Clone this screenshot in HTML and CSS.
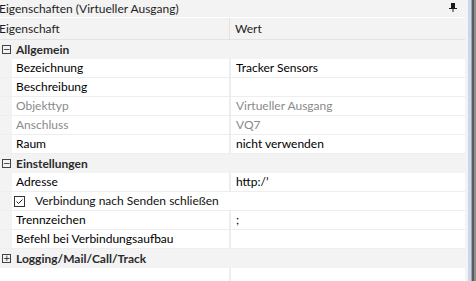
FILE: index.html
```html
<!DOCTYPE html>
<html lang="de">
<head>
<meta charset="utf-8">
<link rel="stylesheet" href="styles.css">
</head>
<body>
<div class="window">
  <div class="panel">
    <div class="titlebar">
      <span class="title">Eigenschaften (Virtueller Ausgang)</span>
      <svg class="pin" width="8" height="9" viewBox="0 0 8 9"><path d="M2 0.5H6M2.5 0.5V5.5M5.5 0.5V5.5M0 5.5H8M4 5.5V9" stroke="#1a1a1a" stroke-width="1" fill="none"/><rect x="3" y="1" width="2" height="4.5" fill="#1a1a1a"/></svg>
    </div>
    <div class="header">
      <div class="hname">Eigenschaft</div>
      <div class="hvalue">Wert</div>
    </div>
    <div class="grid">
      <div class="cat"><span class="exp">−</span><span class="cattext">Allgemein</span></div>
      <div class="row"><div class="gutter"></div><div class="name">Bezeichnung</div><div class="value">Tracker Sensors</div></div>
      <div class="row"><div class="gutter"></div><div class="name">Beschreibung</div><div class="value"></div></div>
      <div class="row dis"><div class="gutter"></div><div class="name">Objekttyp</div><div class="value">Virtueller Ausgang</div></div>
      <div class="row dis"><div class="gutter"></div><div class="name">Anschluss</div><div class="value">VQ7</div></div>
      <div class="row"><div class="gutter"></div><div class="name">Raum</div><div class="value">nicht verwenden</div></div>
      <div class="cat"><span class="exp">−</span><span class="cattext">Einstellungen</span></div>
      <div class="row"><div class="gutter"></div><div class="name">Adresse</div><div class="value">http:/’</div></div>
      <div class="row"><div class="gutter"></div><div class="check"><svg class="box" width="11" height="11" viewBox="0 0 11 11"><rect x="0.5" y="0.5" width="10" height="10" fill="#fff" stroke="#333"/><path d="M2.5 5.5L4.5 7.5L8.5 3.5" stroke="#222" stroke-width="1" fill="none"/></svg><span>Verbindung nach Senden schließen</span></div></div>
      <div class="row"><div class="gutter"></div><div class="name">Trennzeichen</div><div class="value">;</div></div>
      <div class="row"><div class="gutter"></div><div class="name">Befehl bei Verbindungsaufbau</div><div class="value"></div></div>
      <div class="cat"><span class="exp">+</span><span class="cattext">Logging/Mail/Call/Track</span></div>
      <div class="filler"><div class="fname"></div><div class="fvalue"></div></div>
    </div>
  </div>
  <div class="edge"><div class="e1"></div><div class="e2"></div><div class="e3"></div><div class="e4"></div></div>
</div>
</body>
</html>
```

FILE: styles.css
```css
html, body {
  margin: 0;
  padding: 0;
  height: 281px;
  overflow: hidden;
}
body {
  font-family: Lato, "Noto Sans", sans-serif;
  font-size: 12px;
  color: #000;
  background: #f3f3f3;
}
.window {
  display: flex;
  width: 476px;
  height: 281px;
}
.panel {
  width: 465px;
  padding-right: 3px;
  display: flex;
  flex-direction: column;
  background: #f3f3f3;
}
.titlebar {
  height: 17px;
  display: flex;
  align-items: center;
  justify-content: space-between;
  border-bottom: 1px solid #ffffff;
  color: #1e1e1e;
}
.title {
  margin-left: -1px;
  line-height: 17px;
}
.pin {
  margin-right: 8px;
  margin-top: -3px;
}
.header {
  height: 21px;
  display: flex;
  border-bottom: 1px solid #e3e3e3;
  line-height: 21px;
}
.hname {
  width: 230px;
  margin-left: -1px;
  border-right: 1px solid #e3e3e3;
  color: #1e1e1e;
}
.hvalue {
  padding-left: 5px;
  color: #1e1e1e;
}
.grid {
  flex: 1;
  display: flex;
  flex-direction: column;
}
.cat {
  height: 18px;
  display: flex;
  align-items: center;
  border-bottom: 1px solid #f3f3f3;
}
.exp {
  width: 7px;
  height: 7px;
  border: 1px solid #444;
  margin-left: 2px;
  margin-right: 5px;
  font-size: 9px;
  line-height: 7px;
  text-align: center;
  color: #222;
  font-family: "DejaVu Sans", sans-serif;
  box-sizing: content-box;
  overflow: hidden;
}
.cattext {
  font-weight: bold;
  color: #2b2b2b;
}
.row {
  height: 18px;
  display: flex;
  border-bottom: 1px solid #eeeeee;
  line-height: 18px;
}
.gutter {
  width: 12px;
  background: #f3f3f3;
}
.name {
  width: 213px;
  padding-left: 4px;
  background: #fff;
  border-right: 2px solid #eeeeee;
  white-space: nowrap;
}
.value {
  flex: 1;
  padding-left: 5px;
  background: #fff;
}
.dis .name, .dis .value {
  color: #8a8a8a;
}
.check {
  flex: 1;
  background: #fff;
  display: flex;
  align-items: center;
  padding-left: 2px;
  gap: 10px;
}
.check span { color: #111; }
.filler {
  flex: 1;
  display: flex;
  background: #fff;
}
.fname {
  width: 229px;
  border-right: 2px solid #eeeeee;
}
.fvalue { flex: 1; }
.edge {
  display: flex;
  width: 8px;
}
.e1 { width: 3px; background: #cad7ee; }
.e2 { width: 1px; background: #a3a3a3; }
.e3 { width: 2px; background: #5c5c5c; }
.e4 { width: 2px; background: #8e8e8e; }
```
